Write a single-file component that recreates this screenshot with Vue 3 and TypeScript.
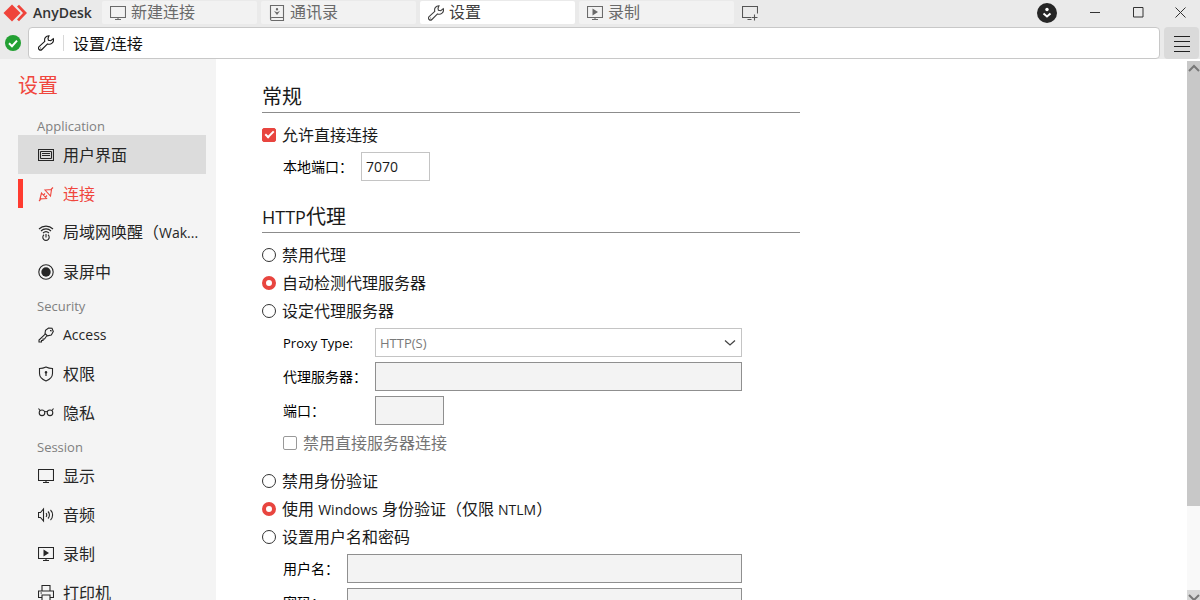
<script setup lang="ts">
import { ref } from 'vue'

interface Shape {
  d: string
  solid?: boolean
}

interface NavItem {
  id: string
  label: string
  icon: string
  hover?: boolean
}

interface NavGroup {
  title: string
  items: NavItem[]
}

const screen = 'M.5 1.5h15v11h-15zM8 12.5v2M5 14.5h6'

const icons: Record<string, Shape[]> = {
  monitor: [{ d: screen }],
  record: [{ d: screen }, { d: 'M5.5 3.5l5.5 3.5-5.5 3.5z', solid: true }],
  book: [
    { d: 'M1.5.5h13v15H3A1.5 1.5 0 0 1 1.5 14zM1.5 14A1.5 1.5 0 0 1 3 12.5h11.5' },
    { d: 'M8 3a1.2 1.2 0 1 1 0 2.4a1.2 1.2 0 0 1 0-2.4zM5 6l3 1.2L11 6l-3 4z', solid: true },
  ],
  wrench: [
    { d: 'M11 .7a4.3 4.3 0 0 0-4.2 5.6L1.1 11.7a1.9 1.9 0 0 0 0 2.8 2 2 0 0 0 2.8 0L9.5 8.9a4.3 4.3 0 0 0 5.8-5.2L12.7 5.7 10.4 5.2 10 3.2z' },
    { d: 'M2.3 12.6h.8v.8h-.8z', solid: true },
  ],
  addMonitor: [{ d: 'M9 12.5H.5v-11h15v7M5.5 14.5h4M12.5 9.5v6M9.5 12.5h6' }],
  ui: [{ d: 'M.5 2.5h15v11H.5zM2.5 4.5h11M4 6.5h8M4 8.5h8M2.500 11.5h11M2.5 4.5v7M13.5 4.5v7' }],
  plug: [
    { d: 'M1 15l2.5-2.5M3.5 7l5 5.5-6.5.5zM7 4l6.5-.5-1 6.5zM13 3.5L15 1.5M5.5 9L7 7.500M7.500 11l1.5-1.5' },
  ],
  wake: [
    { d: 'M1 4a10 10 0 0 1 14 0M3 6a7 7 0 0 1 10 0M5 8a4.500 4.500 0 0 1 6 0M6 9.7a3.200 3.200 0 1 0 4 0M8 9v3.500' },
  ],
  capture: [
    { d: 'M8 .8a7.2 7.2 0 1 1 0 14.4A7.2 7.2 0 0 1 8 .8z' },
    { d: 'M8 3.3a4.7 4.7 0 1 1 0 9.4A4.7 4.7 0 0 1 8 3.3z', solid: true },
  ],
  key: [
    { d: 'M10.5 1L14 1.3 15.3 4.5 13.3 8 9.5 8.8 7 6.5 7.5 3.2zM7.2 7.2L1 13v2h2.5v-1.5H5V12h1.5l2.3-3.2M12 3.5h1v1' },
  ],
  shield: [
    { d: 'M8 1c2 1 4 1.5 6.5 1.5v5c0 3.5-3 6-6.5 7.5-3.5-1.5-6.5-4-6.5-7.5v-5C4 2.5 6 2 8 1z' },
    { d: 'M8 5a1.4 1.4 0 0 1 .6 2.6V10H7.4V7.6A1.4 1.4 0 0 1 8 5z', solid: true },
  ],
  glasses: [
    { d: 'M.5 3.5L2 5.500M14 5.500l1.500-2M6.700 7c.6-.7 2-.7 2.600 0M4 5a2.800 2.800 0 1 1 0 5.600A2.800 2.800 0 0 1 4 5zM12 5a2.800 2.800 0 1 1 0 5.600A2.800 2.800 0 0 1 12 5z' },
  ],
  speaker: [
    { d: 'M.5 5.5h2l3-3.5v12l-3-3.5h-2zM8 6.2a2.5 2.5 0 0 1 0 3.6M10 4.5a5 5 0 0 1 0 7M12.5 3a7 7 0 0 1 0 10' },
  ],
  printer: [{ d: 'M4 6V.5h8V6M4 12.5H.5V6h15v6.5H12M4 10h8v5.5H4zM2.5 8h1.5' }],
}

const tabs = [
  { id: 'new', label: '新建连接', icon: 'monitor' },
  { id: 'book', label: '通讯录', icon: 'book' },
  { id: 'settings', label: '设置', icon: 'wrench' },
  { id: 'recordings', label: '录制', icon: 'record' },
]
const activeTab = ref('settings')

const groups: NavGroup[] = [
  {
    title: 'Application',
    items: [
      { id: 'ui', label: '用户界面', icon: 'ui', hover: true },
      { id: 'connection', label: '连接', icon: 'plug' },
      { id: 'wake', label: '局域网唤醒（Wak...', icon: 'wake' },
      { id: 'capture', label: '录屏中', icon: 'capture' },
    ],
  },
  {
    title: 'Security',
    items: [
      { id: 'access', label: 'Access', icon: 'key' },
      { id: 'permissions', label: '权限', icon: 'shield' },
      { id: 'privacy', label: '隐私', icon: 'glasses' },
    ],
  },
  {
    title: 'Session',
    items: [
      { id: 'display', label: '显示', icon: 'monitor' },
      { id: 'audio', label: '音频', icon: 'speaker' },
      { id: 'recording', label: '录制', icon: 'record' },
      { id: 'printer', label: '打印机', icon: 'printer' },
    ],
  },
]
const activeItem = ref('connection')

const address = ref('设置/连接')
const allowDirect = ref(true)
const localPort = ref('7070')
const proxyModes = [
  { value: 'off', label: '禁用代理' },
  { value: 'auto', label: '自动检测代理服务器' },
  { value: 'manual', label: '设定代理服务器' },
]
const proxyMode = ref('auto')
const authModes = [
  { value: 'off', label: '禁用身份验证' },
  { value: 'windows', label: '使用 Windows 身份验证（仅限 NTLM）' },
  { value: 'user', label: '设置用户名和密码' },
]
const authMode = ref('windows')

// Latin words are set a little smaller than the Chinese text around them.
function runs(text: string) {
  return text
    .split(/([A-Za-z.]+)/)
    .filter((part) => part !== '')
    .map((part) => ({ text: part, latin: /[A-Za-z]/.test(part) }))
}
</script>

<template>
  <div class="window">
    <header class="titlebar">
      <div class="brand">
        <svg class="logo" viewBox="0 0 24 18" aria-hidden="true">
          <path d="M9 .5L17.5 9 9 17.5.5 9z" />
          <path d="M14 2.5L16 .8 24 9l-8 8.200-2-1.7L20 9z" />
        </svg>
        <span class="brand-name">AnyDesk</span>
      </div>
      <nav class="tabs">
        <button
          v-for="tab in tabs"
          :key="tab.id"
          type="button"
          class="tab"
          :class="{ active: tab.id === activeTab }"
          @click="activeTab = tab.id"
        >
          <svg class="icon" viewBox="0 0 16 16" aria-hidden="true">
            <path v-for="s in icons[tab.icon]" :key="s.d" :d="s.d" :class="{ solid: s.solid }" />
          </svg>
          {{ tab.label }}
        </button>
        <button type="button" class="add" aria-label="Add">
          <svg class="icon" viewBox="0 0 16 16" aria-hidden="true">
            <path v-for="s in icons.addMonitor" :key="s.d" :d="s.d" />
          </svg>
        </button>
      </nav>
      <div class="controls">
        <button type="button" class="update" aria-label="Update">
          <svg viewBox="0 0 20 20" aria-hidden="true">
            <circle cx="10" cy="10" r="10" fill="#262626" />
            <circle cx="10" cy="6.5" r="1.7" fill="#fff" />
            <path d="M6.5 10.5L10 13.5l3.5-3" fill="none" stroke="#fff" stroke-width="2" />
          </svg>
        </button>
        <button type="button" class="control" aria-label="Minimize">
          <svg viewBox="0 0 11 11"><path d="M0 5.5h10" /></svg>
        </button>
        <button type="button" class="control" aria-label="Maximize">
          <svg viewBox="0 0 11 11"><path d="M.5.5h9.500v9.500H.5z" /></svg>
        </button>
        <button type="button" class="control close" aria-label="Close">
          <svg viewBox="0 0 11 11"><path d="M.5.5l10 10M10.5.5l-10 10" /></svg>
        </button>
      </div>
    </header>

    <div class="toolbar">
      <svg class="status" viewBox="0 0 16 16" aria-hidden="true">
        <circle cx="8" cy="8" r="8" />
        <path d="M4 8.2l3 3 5-5.5" />
      </svg>
      <label class="address">
        <svg class="icon" viewBox="0 0 16 16" aria-hidden="true">
          <path v-for="s in icons.wrench" :key="s.d" :d="s.d" :class="{ solid: s.solid }" />
        </svg>
        <input v-model="address" type="text" aria-label="Address" />
      </label>
      <button type="button" class="menu" aria-label="Menu">
        <svg viewBox="0 0 16 17"><path d="M0 1.5h16M0 6.5h16M0 11.5h16M0 16.5h16" /></svg>
      </button>
    </div>

    <div class="body">
      <aside class="sidebar">
        <h1>设置</h1>
        <section v-for="group in groups" :key="group.title">
          <h2>{{ group.title }}</h2>
          <button
            v-for="item in group.items"
            :key="item.id"
            type="button"
            class="item"
            :class="{ active: item.id === activeItem, hover: item.hover }"
            @click="activeItem = item.id"
          >
            <svg class="icon" viewBox="0 0 16 16" aria-hidden="true">
              <path v-for="s in icons[item.icon]" :key="s.d" :d="s.d" :class="{ solid: s.solid }" />
            </svg>
            <span><span v-for="r in runs(item.label)" :key="r.text" :class="{ latin: r.latin }">{{ r.text }}</span></span>
          </button>
        </section>
      </aside>

      <main class="content">
        <section class="panel">
          <h2>常规</h2>
          <label class="choice">
            <input v-model="allowDirect" type="checkbox" />
            允许直接连接
          </label>
          <div class="fields">
            <label for="local-port">本地端口：</label>
            <input id="local-port" v-model="localPort" class="short" type="text" />
          </div>
        </section>

        <section class="panel">
          <h2><span class="latin">HTTP</span>代理</h2>
          <label v-for="mode in proxyModes" :key="mode.value" class="choice">
            <input v-model="proxyMode" type="radio" name="proxy" :value="mode.value" />
            {{ mode.label }}
          </label>
          <div class="fields">
            <label for="proxy-type" class="latin">Proxy Type:</label>
            <div class="select">
              <select id="proxy-type" disabled>
                <option>HTTP(S)</option>
              </select>
              <svg viewBox="0 0 12 8" aria-hidden="true"><path d="M1 1.5l5 4.5 5-4.5" /></svg>
            </div>
            <label for="proxy-host">代理服务器：</label>
            <input id="proxy-host" type="text" disabled />
            <label for="proxy-port">端口：</label>
            <input id="proxy-port" class="short" type="text" disabled />
          </div>
          <label class="choice nested">
            <input type="checkbox" disabled />
            禁用直接服务器连接
          </label>

          <div class="auth">
            <label v-for="mode in authModes" :key="mode.value" class="choice">
              <input v-model="authMode" type="radio" name="auth" :value="mode.value" />
              <span><span v-for="r in runs(mode.label)" :key="r.text" :class="{ latin: r.latin }">{{ r.text }}</span></span>
            </label>
            <div class="fields">
              <label for="user">用户名：</label>
              <input id="user" type="text" disabled />
              <label for="password">密码：</label>
              <input id="password" type="password" disabled />
            </div>
          </div>
        </section>
      </main>

      <div class="scrollbar" aria-hidden="true">
        <div class="thumb">
          <svg viewBox="0 0 12 8"><path d="M1 7l5-5 5 5" /></svg>
        </div>
        <div class="track"></div>
        <div class="down">
          <svg viewBox="0 0 12 8"><path d="M1 1l5 5 5-5" /></svg>
        </div>
      </div>
    </div>
  </div>
</template>

<style>
body {
  margin: 0;
  overflow: hidden;
}
</style>

<style scoped>
.window {
  display: flex;
  flex-direction: column;
  height: 100vh;
  overflow: hidden;
  background: #eaeaea;
  color: #1a1a1a;
  font-family: 'Open Sans', 'Noto Sans CJK SC', sans-serif;
  font-size: 16px;
}

*,
*::before,
*::after {
  box-sizing: border-box;
}

button,
input,
select {
  margin: 0;
  padding: 0;
  border: 0;
  background: none;
  color: inherit;
  font: inherit;
}

svg {
  display: block;
  flex: none;
  fill: none;
}

.icon {
  width: 16px;
  height: 16px;
  stroke: currentColor;
  stroke-width: 1.1;
}

.icon .solid {
  fill: currentColor;
  stroke: none;
}

.latin {
  font-size: 14px;
}

.titlebar {
  display: flex;
  flex: none;
  height: 27px;
  padding-top: 1px;
}

.brand {
  display: flex;
  align-items: center;
  gap: 6px;
  width: 102px;
  height: 23px;
  padding-left: 3px;
}

.logo {
  width: 24px;
  height: 18px;
  fill: #ef443b;
}

.brand-name {
  font-size: 14px;
  font-weight: 600;
  color: #333;
}

.tabs {
  display: flex;
  flex: 1;
  gap: 4px;
  height: 23px;
}

.tab {
  display: flex;
  align-items: center;
  gap: 5px;
  width: 155px;
  padding-left: 8px;
  border-radius: 2px;
  background: #f2f2f2;
  color: #6a6a6a;
  line-height: 23px;
  white-space: nowrap;
}

.tab.active {
  background: #fff;
  color: #404040;
}

.add {
  padding: 0 4px;
  color: #555;
}

.controls {
  display: flex;
  align-items: center;
  height: 23px;
}

.update {
  margin-right: 17px;
}

.update svg {
  width: 20px;
  height: 20px;
}

.control {
  display: grid;
  place-items: center;
  width: 43px;
  height: 23px;
}

.control svg {
  width: 11px;
  height: 11px;
  stroke: #333;
}

.control.close {
  width: 40px;
}

.toolbar {
  display: flex;
  flex: none;
  align-items: center;
  gap: 4px;
  height: 32px;
  padding: 0 1px 0 5px;
}

.status {
  width: 16px;
  height: 16px;
  margin-right: 3px;
  fill: #23a033;
}

.status path {
  fill: none;
  stroke: #fff;
  stroke-width: 2;
}

.address {
  display: flex;
  flex: 1;
  align-items: center;
  gap: 9px;
  height: 32px;
  padding-left: 9px;
  border: 1px solid #c8c8c8;
  border-radius: 4px;
  background: #fff;
}

.address input {
  flex: 1;
  height: 16px;
  padding-left: 9px;
  border-left: 1px solid #d8d8d8;
  color: #111;
  line-height: 16px;
  outline: 0;
}

.menu {
  display: grid;
  place-items: center;
  width: 35px;
  height: 32px;
  border-radius: 4px;
  background: #dadada;
}

.menu svg {
  width: 16px;
  height: 17px;
  stroke: #222;
}

.body {
  display: flex;
  flex: 1;
  min-height: 0;
  background: #fff;
}

.sidebar {
  flex: none;
  width: 216px;
  padding: 14px 10px 0 18px;
  overflow: hidden;
  background: #f4f4f4;
}

.sidebar h1 {
  margin: 0 0 12px;
  color: #f0463d;
  font-size: 20px;
  font-weight: 400;
  line-height: 26px;
}

.sidebar h2 {
  margin: 0;
  padding: 7px 0 1px 19px;
  color: #808080;
  font-size: 13px;
  font-weight: 400;
  line-height: 16px;
}

.item {
  display: flex;
  align-items: center;
  gap: 9px;
  width: 100%;
  height: 39px;
  padding-left: 20px;
  color: #262626;
  line-height: 24px;
  white-space: nowrap;
}

.item.hover {
  background: #dcdcdc;
}

.item.active {
  padding-left: 15px;
  color: #f0463d;
}

.item.active::before {
  content: '';
  width: 5px;
  height: 29px;
  margin-left: -15px;
  margin-right: 6px;
  background: #ff3b30;
}

.content {
  flex: 1;
  min-width: 0;
  padding: 23px 46px 0;
  overflow: hidden;
}

.panel {
  max-width: 538px;
  margin-bottom: 21px;
}

.panel h2 {
  margin: 0 0 8px;
  border-bottom: 1px solid #8c8c8c;
  font-size: 20px;
  font-weight: 400;
  line-height: 30px;
}

.panel h2 .latin {
  font-size: 18px;
}

.choice {
  display: flex;
  align-items: center;
  gap: 6px;
  height: 28px;
  line-height: 28px;
  white-space: nowrap;
}

.choice input {
  display: grid;
  flex: none;
  place-content: center;
  width: 14px;
  height: 14px;
  appearance: none;
  border: 1px solid #333;
  background: #fff;
}

.choice input[type='radio'] {
  border-radius: 50%;
}

.choice input[type='radio']:checked {
  border: 4px solid #e8453f;
}

.choice input[type='checkbox'] {
  border-radius: 2px;
}

.choice input[type='checkbox']:checked {
  border-color: #e8453f;
  background: #e8453f;
}

.choice input[type='checkbox']:checked::after {
  content: '';
  width: 9px;
  height: 5px;
  margin-bottom: 3px;
  border: solid #fff;
  border-width: 0 0 2px 2px;
  transform: rotate(-45deg);
}

.choice input:disabled {
  border-color: #999;
}

.nested {
  margin: 4px 0 0 21px;
  color: #757575;
}

.fields {
  display: grid;
  grid-template-columns: auto 1fr;
  align-items: center;
  gap: 5px 8px;
  margin: 3px 58px 0 21px;
  font-size: 14px;
  line-height: 20px;
}

.fields label {
  color: #000;
}

.fields .latin {
  font-size: 13px;
}

.fields input,
.select select {
  width: 100%;
  height: 29px;
  padding: 0 4px;
  border: 1px solid #c4c4c4;
  background: #fff;
}

.fields input:disabled {
  border-color: #8f8f8f;
  background: #f3f3f3;
}

.fields .short {
  width: 69px;
}

.select {
  display: grid;
  align-items: center;
}

.select > * {
  grid-area: 1 / 1;
}

.select select {
  appearance: none;
  color: #7a7a7a;
  font-size: 13px;
  opacity: 1;
}

.select svg {
  justify-self: end;
  width: 12px;
  height: 8px;
  margin-right: 6px;
  stroke: #444;
  stroke-width: 1.3;
  pointer-events: none;
}

.auth {
  margin-top: 10px;
}

.scrollbar {
  display: flex;
  flex: none;
  flex-direction: column;
  width: 13px;
  padding-top: 2px;
}

.scrollbar svg {
  width: 12px;
  height: 8px;
  margin-left: 1px;
  stroke: #777;
  stroke-width: 2;
}

.thumb {
  flex: 84;
  padding-top: 3px;
  background: #c8c8c8;
}

.track {
  flex: 16;
  background: #f9f9f9;
}

.down {
  height: 10px;
  padding-top: 4px;
  overflow: hidden;
  background: #d8d8d8;
}
</style>
